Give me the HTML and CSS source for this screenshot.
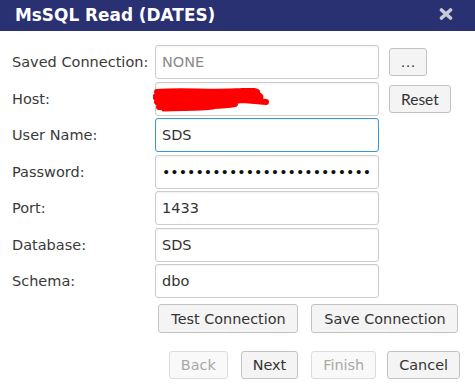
FILE: index.html
```html
<!DOCTYPE html>
<html>
<head>
<meta charset="utf-8">
<link rel="stylesheet" href="styles.css">
</head>
<body>
<div class="dialog">
  <div class="titlebar">
    <span class="title">MsSQL Read (DATES)</span>
    <svg class="close" width="14" height="12" viewBox="0 0 14 12"><path d="M2.5 2 L11.5 10 M11.5 2 L2.5 10" stroke="#c9cad8" stroke-width="3.6" stroke-linecap="round"/></svg>
  </div>
  <div class="form">
    <label class="lbl">Saved Connection:</label>
    <input class="field" type="text" placeholder="NONE">
    <button class="btn small dots">...</button>

    <label class="lbl">Host:</label>
    <div class="fieldwrap">
      <input class="field" type="text">
      <svg class="scribble" width="120" height="24" viewBox="0 0 120 24"><g fill="none" stroke="#ff0000" stroke-linecap="round" stroke-linejoin="round"><path d="M4 4 C30 2 60 5 88 3 C95 2 100 2 104 4" stroke-width="6"/><path d="M3 9 C30 7 70 10 100 7 C106 7 110 9 104 11" stroke-width="7"/><path d="M4 14 C30 12 60 16 90 12 L113 14" stroke-width="6"/><path d="M6 19 C30 18 55 20 82 16" stroke-width="6"/><path d="M10 22 C30 21 45 22 60 20" stroke-width="3"/></g></svg>
    </div>
    <button class="btn small">Reset</button>

    <label class="lbl">User Name:</label>
    <input class="field focus" type="text" value="SDS">
    <span></span>

    <label class="lbl">Password:</label>
    <input class="field pw" type="password" value="abcdefghijklmnopqrstuvwxyz">
    <span></span>

    <label class="lbl">Port:</label>
    <input class="field" type="text" value="1433">
    <span></span>

    <label class="lbl">Database:</label>
    <input class="field" type="text" value="SDS">
    <span></span>

    <label class="lbl">Schema:</label>
    <input class="field" type="text" value="dbo">
    <span></span>
  </div>
  <div class="conn-row">
    <button class="btn wide">Test Connection</button>
    <button class="btn wide">Save Connection</button>
  </div>
  <div class="nav-row">
    <button class="btn nav" disabled>Back</button>
    <button class="btn nav">Next</button>
    <button class="btn nav" disabled>Finish</button>
    <button class="btn nav">Cancel</button>
  </div>
</div>
</body>
</html>
```
FILE: styles.css
```css
html, body {
  margin: 0;
  padding: 0;
  background: #ffffff;
}
.dialog {
  width: 475px;
  height: 391px;
  font-family: "DejaVu Sans", Verdana, sans-serif;
  color: #333333;
}
.titlebar {
  height: 31px;
  background: #2a3173;
  display: flex;
  align-items: center;
  justify-content: space-between;
  padding: 0 22px 0 15px;
  box-sizing: border-box;
}
.title {
  color: #ffffff;
  font-weight: bold;
  font-size: 16.9px;
  margin-top: -1px;
}
.close {
  display: block;
  margin-top: -3px;
}
.form {
  display: grid;
  grid-template-columns: 143px 224px auto;
  column-gap: 0;
  row-gap: 2.5px;
  padding: 14px 0 0 12px;
  align-items: center;
}
.lbl {
  font-size: 14.5px;
  color: #3a3a3a;
  white-space: nowrap;
}
.field {
  box-sizing: border-box;
  width: 224px;
  height: 34px;
  border: 1px solid #cccccc;
  border-radius: 3px;
  box-shadow: inset 0 1px 2px rgba(0,0,0,0.06);
  padding: 0 6px;
  font-family: "DejaVu Sans", Verdana, sans-serif;
  font-size: 14.5px;
  color: #333333;
  background: #ffffff;
  outline: none;
  margin: 0;
  display: block;
}
.field::placeholder {
  color: #8a8a8a;
}
.field.focus {
  border-color: #3a97d4;
  caret-color: #000;
}
.field.pw {
  font-size: 14.2px;
  color: #111;
}
.fieldwrap {
  position: relative;
  width: 224px;
  height: 34px;
}
.scribble {
  position: absolute;
  left: -2px;
  top: 6px;
}
.btn {
  box-sizing: border-box;
  background: #f4f4f4;
  border: 1px solid #c3c3c3;
  border-radius: 3px;
  font-family: "DejaVu Sans", Verdana, sans-serif;
  font-size: 14.4px;
  color: #333333;
  height: 29px;
  padding: 0;
  margin: 0;
}
.btn:disabled {
  color: #a8a8a8;
  border-color: #dcdcdc;
  background: #f9f9f9;
}
.btn.small {
  font-family: Lato, "DejaVu Sans", sans-serif;
  font-size: 15.5px;
  height: 28px;
  justify-self: start;
  margin-left: 10px;
  padding: 0 11px;
}
.btn.dots {
  width: 38px;
  letter-spacing: 2px;
  font-size: 13px;
  padding: 0 0 0 2px;
}
.conn-row {
  display: flex;
  gap: 13px;
  padding: 6px 0 0 158px;
}
.btn.wide {
  padding: 0 11px 0 12px;
}
.conn-row .btn:nth-child(1) { width: 140px; }
.conn-row .btn:nth-child(2) { width: 147px; }
.nav-row {
  display: flex;
  justify-content: flex-end;
  gap: 13px;
  padding: 18px 15px 0 0;
}
.nav-row .btn {
  height: 28px;
  padding: 0 11px;
}
.nav-row .btn:nth-child(3) { margin-right: -2px; }
```
